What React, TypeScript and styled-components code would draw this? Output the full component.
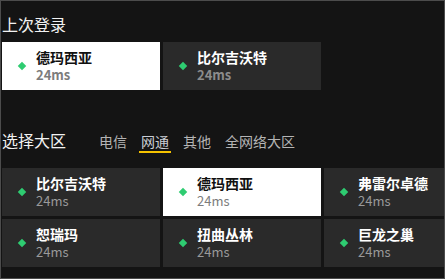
import React from "react";
import styled, { createGlobalStyle } from "styled-components";

const Global = createGlobalStyle`
  html, body { margin: 0; padding: 0; background: #141414; }
  * { box-sizing: border-box; }
`;

const Panel = styled.div`
  width: 445px;
  height: 279px;
  border: 1px solid #4c4c4c;
  background: #141414;
  overflow: hidden;
  padding: 13px 1px 0 1px;
  font-family: "Noto Sans CJK SC", "Noto Sans", sans-serif;
  color: #eee;
`;

const Title = styled.div`
  font-size: 16px;
  line-height: 20px;
  color: #f2f2f2;
  white-space: nowrap;
`;

const Row = styled.div`
  display: flex;
  gap: 3px;
  margin-top: 8px;
`;

const Header = styled.div`
  display: flex;
  align-items: baseline;
  margin-top: 40px;
  height: 24px;
`;

const Tabs = styled.div`
  display: flex;
  gap: 14px;
  margin-left: 33px;
`;

const Tab = styled.div<{ $active?: boolean }>`
  position: relative;
  font-size: 14px;
  line-height: 18px;
  color: ${(p) => (p.$active ? "#c9cdd3" : "#b4b4b4")};
  white-space: nowrap;
  &::after {
    content: "";
    display: ${(p) => (p.$active ? "block" : "none")};
    position: absolute;
    left: -2px;
    right: -2px;
    bottom: -3px;
    height: 2px;
    background: #f5c200;
  }
`;

const Grid = styled.div`
  display: grid;
  grid-template-columns: repeat(3, 158px);
  grid-auto-rows: 48px;
  gap: 3px;
  margin-top: 14px;
  width: max-content;
`;

const Card = styled.div<{ $selected?: boolean }>`
  width: 158px;
  height: 48px;
  flex: 0 0 158px;
  background: ${(p) => (p.$selected ? "#ffffff" : "#2a2a2a")};
  display: flex;
  align-items: center;
  padding-left: 17px;
`;

const Dot = styled.span`
  width: 6px;
  height: 6px;
  background: #2ecc71;
  transform: rotate(45deg);
  margin-right: 11px;
  flex: none;
`;

const Info = styled.div`
  display: flex;
  flex-direction: column;
`;

const Name = styled.div<{ $selected?: boolean }>`
  font-size: 14px;
  line-height: 18px;
  font-weight: 700;
  color: ${(p) => (p.$selected ? "#111" : "#fff")};
  white-space: nowrap;
`;

const Ping = styled.div<{ $bold?: boolean; $selected?: boolean }>`
  font-size: 13px;
  line-height: 18px;
  font-weight: ${(p) => (p.$bold ? 700 : 400)};
  color: ${(p) => (p.$selected ? "#7c7c7c" : p.$bold ? "#8c8c8c" : "#9a9a9a")};
  white-space: nowrap;
`;

type Server = { name: string; ping: string; selected?: boolean };

const ServerCard = ({ s, bold }: { s: Server; bold?: boolean }) => (
  <Card $selected={s.selected}>
    <Dot />
    <Info>
      <Name $selected={s.selected}>{s.name}</Name>
      <Ping $bold={bold} $selected={s.selected}>{s.ping}</Ping>
    </Info>
  </Card>
);

const recent: Server[] = [
  { name: "德玛西亚", ping: "24ms", selected: true },
  { name: "比尔吉沃特", ping: "24ms" },
];

const servers: Server[] = [
  { name: "比尔吉沃特", ping: "24ms" },
  { name: "德玛西亚", ping: "24ms", selected: true },
  { name: "弗雷尔卓德", ping: "24ms" },
  { name: "恕瑞玛", ping: "24ms" },
  { name: "扭曲丛林", ping: "24ms" },
  { name: "巨龙之巢", ping: "24ms" },
];

const tabs = ["电信", "网通", "其他", "全网络大区"];

export default function App() {
  return (
    <>
      <Global />
      <Panel>
        <Title>上次登录</Title>
        <Row>
          {recent.map((s) => (
            <ServerCard key={s.name} s={s} bold />
          ))}
        </Row>
        <Header>
          <Title>选择大区</Title>
          <Tabs>
            {tabs.map((t) => (
              <Tab key={t} $active={t === "网通"}>
                {t}
              </Tab>
            ))}
          </Tabs>
        </Header>
        <Grid>
          {servers.map((s) => (
            <ServerCard key={s.name} s={s} />
          ))}
        </Grid>
      </Panel>
    </>
  );
}
